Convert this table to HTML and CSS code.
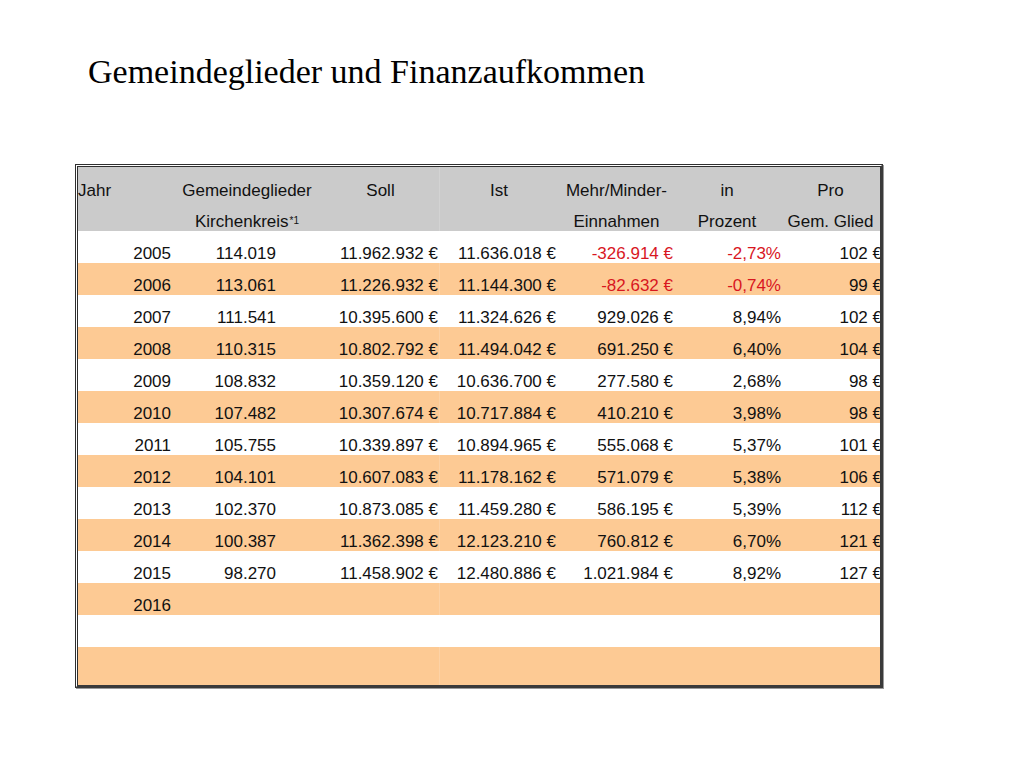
FILE: index.html
```html
<!DOCTYPE html>
<html lang="de">
<head>
<meta charset="utf-8">
<title>Gemeindeglieder und Finanzaufkommen</title>
<link rel="stylesheet" href="styles.css">
</head>
<body>
<h1 class="title">Gemeindeglieder und Finanzaufkommen</h1>
<div class="frame">
<table class="data">
<colgroup>
<col class="c-jahr"><col class="c-gem"><col class="c-soll"><col class="c-ist"><col class="c-mehr"><col class="c-in"><col class="c-pro">
</colgroup>
<thead>
<tr class="h1">
<th class="t-left">Jahr</th><th class="gem">Gemeindeglieder</th><th class="soll">Soll</th><th>Ist</th><th>Mehr/Minder-</th><th class="in">in</th><th class="pro">Pro</th>
</tr>
<tr class="h2">
<th></th><th class="gem">Kirchenkreis<span class="sup">*1</span></th><th class="soll"></th><th></th><th>Einnahmen</th><th class="in">Prozent</th><th class="pro">Gem. Glied</th>
</tr>
</thead>
<tbody>
<tr class="w"><td class="yr">2005</td><td class="gm">114.019</td><td class="soll">11.962.932 €</td><td>11.636.018 €</td><td class="neg">-326.914 €</td><td class="neg">-2,73%</td><td>102 €</td></tr>
<tr class="o"><td class="yr">2006</td><td class="gm">113.061</td><td class="soll">11.226.932 €</td><td>11.144.300 €</td><td class="neg">-82.632 €</td><td class="neg">-0,74%</td><td>99 €</td></tr>
<tr class="w"><td class="yr">2007</td><td class="gm">111.541</td><td class="soll">10.395.600 €</td><td>11.324.626 €</td><td>929.026 €</td><td>8,94%</td><td>102 €</td></tr>
<tr class="o"><td class="yr">2008</td><td class="gm">110.315</td><td class="soll">10.802.792 €</td><td>11.494.042 €</td><td>691.250 €</td><td>6,40%</td><td>104 €</td></tr>
<tr class="w"><td class="yr">2009</td><td class="gm">108.832</td><td class="soll">10.359.120 €</td><td>10.636.700 €</td><td>277.580 €</td><td>2,68%</td><td>98 €</td></tr>
<tr class="o"><td class="yr">2010</td><td class="gm">107.482</td><td class="soll">10.307.674 €</td><td>10.717.884 €</td><td>410.210 €</td><td>3,98%</td><td>98 €</td></tr>
<tr class="w"><td class="yr">2011</td><td class="gm">105.755</td><td class="soll">10.339.897 €</td><td>10.894.965 €</td><td>555.068 €</td><td>5,37%</td><td>101 €</td></tr>
<tr class="o"><td class="yr">2012</td><td class="gm">104.101</td><td class="soll">10.607.083 €</td><td>11.178.162 €</td><td>571.079 €</td><td>5,38%</td><td>106 €</td></tr>
<tr class="w"><td class="yr">2013</td><td class="gm">102.370</td><td class="soll">10.873.085 €</td><td>11.459.280 €</td><td>586.195 €</td><td>5,39%</td><td>112 €</td></tr>
<tr class="o"><td class="yr">2014</td><td class="gm">100.387</td><td class="soll">11.362.398 €</td><td>12.123.210 €</td><td>760.812 €</td><td>6,70%</td><td>121 €</td></tr>
<tr class="w"><td class="yr">2015</td><td class="gm">98.270</td><td class="soll">11.458.902 €</td><td>12.480.886 €</td><td>1.021.984 €</td><td>8,92%</td><td>127 €</td></tr>
<tr class="o"><td class="yr">2016</td><td class="gm"></td><td class="soll"></td><td></td><td></td><td></td><td></td></tr>
<tr class="w"><td class="yr"></td><td class="gm"></td><td class="soll"></td><td></td><td></td><td></td><td></td></tr>
<tr class="o last"><td class="yr"></td><td class="gm"></td><td class="soll"></td><td></td><td></td><td></td><td></td></tr>
</tbody>
</table>
</div>
</body>
</html>
```
FILE: styles.css
```css
html, body {
  margin: 0;
  padding: 0;
  background: #ffffff;
}

body {
  width: 1024px;
  height: 768px;
  overflow: hidden;
}

.title {
  margin: 52px 0 0 88px;
  font-family: "Liberation Serif", "Times New Roman", serif;
  font-weight: normal;
  font-size: 34px;
  line-height: 40px;
  height: 40px;
  color: #000;
}

.frame {
  margin: 72px 0 0 75px;
  width: 802px;
  height: 518px;
  border-top: 3px double #2f2f2f;
  border-left: 3px double #2f2f2f;
  border-right: 3px solid #3a3a3a;
  border-bottom: 3px solid #3a3a3a;
  overflow: hidden;
  box-shadow: 1px 1px 0 #9a9a9a;
}

.data {
  width: 804px;
  table-layout: fixed;
  border-collapse: collapse;
  border-spacing: 0;
  font-family: "Liberation Sans", Arial, Helvetica, sans-serif;
  font-size: 17px;
  color: #111;
}

.c-jahr { width: 98px; }
.c-gem { width: 154px; }
.c-soll { width: 110px; }
.c-ist { width: 118px; }
.c-mehr { width: 117px; }
.c-in { width: 108px; }
.c-pro { width: 99px; }

.data th,
.data td {
  padding: 0;
  vertical-align: bottom;
  white-space: nowrap;
}

.data th {
  font-weight: normal;
  text-align: center;
  background: #cbcbcb;
}

.h1 th {
  height: 33px;
  line-height: 18px;
}

.h2 th {
  height: 31px;
  line-height: 19px;
}

.data th.t-left {
  text-align: left;
}

.data th.gem {
  padding-right: 12px;
}

.data th.soll {
  padding-right: 9px;
}

.data th.in {
  padding-right: 4px;
}

.data th.pro {
  padding-right: 4px;
}

.sup {
  font-size: 10px;
  vertical-align: 3px;
  margin-left: 1px;
}

.data td {
  height: 32px;
  line-height: 19px;
  text-align: right;
  padding-right: 2px;
}

.data td:last-child {
  padding-right: 0;
}

.data td.yr {
  padding-right: 5px;
}

.data td.gm {
  padding-right: 54px;
}

.data .soll {
  box-shadow: inset -1px 0 0 rgba(255, 255, 255, 0.16);
}

.w td {
  background: #ffffff;
}

.o td {
  background: #fdca94;
}

.last td {
  height: 38px;
}

.data td.neg {
  color: #d8171f;
}
```
